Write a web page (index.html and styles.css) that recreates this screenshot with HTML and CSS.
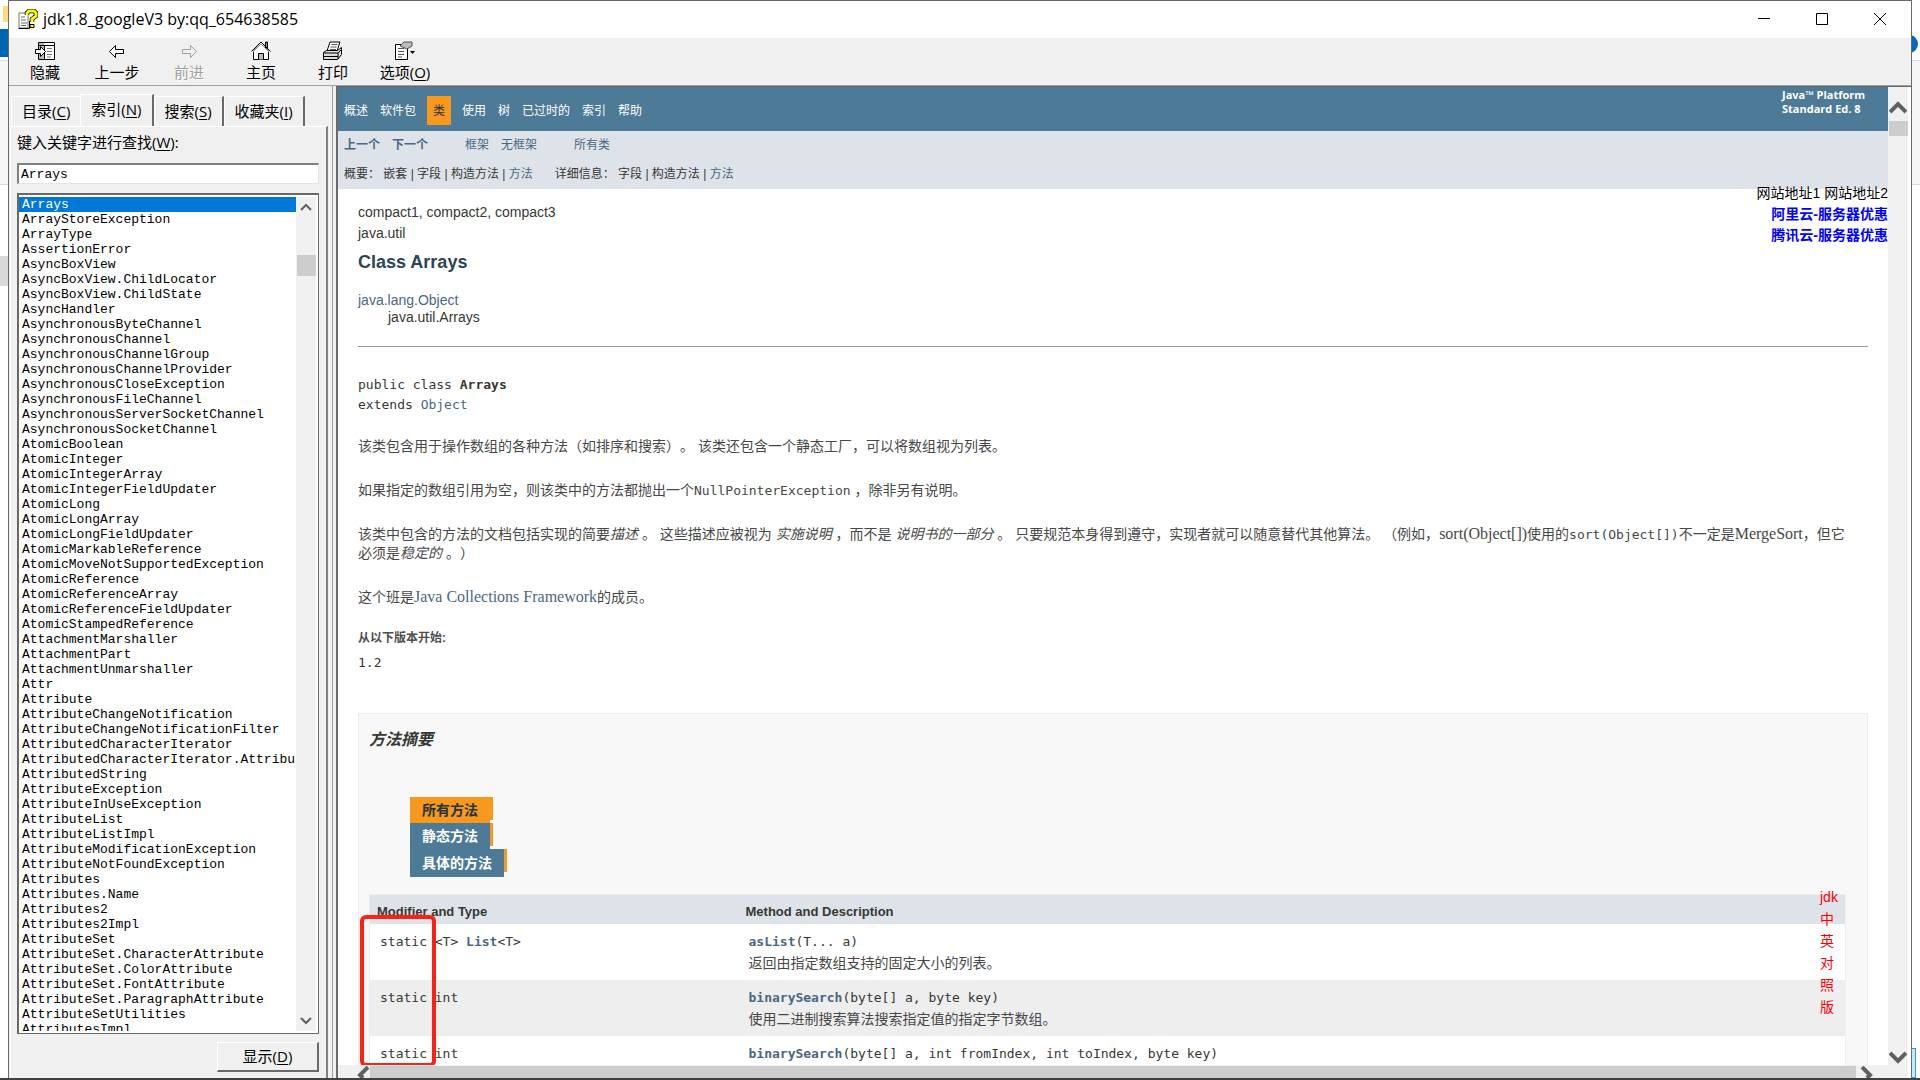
FILE: index.html
```html
<!DOCTYPE html>
<html lang="zh-CN">
<head>
<meta charset="utf-8">
<title>jdk1.8_googleV3 by:qq_654638585</title>
<link rel="stylesheet" href="styles.css">
</head>
<body>
<div class="desktop">
  <div class="strip strip-left"><i class="folder"></i><i class="blue"></i><i class="ribbon"></i><i class="gap"></i><i class="thumb"></i></div>
  <div class="window">
    <header class="titlebar">
      <svg class="app-icon" width="20" height="20" viewBox="0 0 20 20"><path d="M1 4h9v15H1z" fill="#fff" stroke="#777"/><path d="M.5 19.500h11V12" fill="none" stroke="#000"/><path d="M3 8h4M3 11h5M3 14h6M3 16.500h5" stroke="#666"/><path d="M9 6V4l2-2h5l2 2v3l-4 3v3" fill="none" stroke="#000" stroke-width="4.500"/><path d="M9 6V4l2-2h5l2 2v3l-4 3v3" fill="none" stroke="#ff0" stroke-width="3"/><path d="M12 15.500h4v3h-4z" fill="#ff0" stroke="#000"/></svg>
      <h1>jdk1.8_googleV3 by:qq_654638585</h1>
      <div class="controls">
        <button aria-label="最小化"><svg width="12" height="12"><path d="M0 5.500h12" stroke="#000"/></svg></button>
        <button aria-label="最大化"><svg width="12" height="12"><path d="M.5.5h11v11H.5z" fill="none" stroke="#000"/></svg></button>
        <button aria-label="关闭"><svg width="12" height="12"><path d="M0 0l12 12M12 0L0 12" stroke="#000"/></svg></button>
      </div>
    </header>
    <div class="toolbar">
      <button><svg width="20" height="20"><path d="M3.500 1.500h16v17h-16z" fill="#fff" stroke="#000"/><path d="M4 2h5v16H4z" fill="#bbb"/><path d="M9.500 4v14M3 4.500h16" stroke="#000"/><path d="M12 7.500h5M12 10.500h5M12 13.500h5M12 16h4" stroke="#777"/><path d="M.5 8.500h5v-3l5 5-5 5v-3h-5z" fill="#fff" stroke="#000"/></svg><span>隐藏</span></button>
      <button><svg width="20" height="20"><path d="M2.500 10.500l6-6v4h8v4h-8v4z" fill="#fff" stroke="#000"/></svg><span>上一步</span></button>
      <button disabled><svg width="20" height="20"><path d="M17.500 10.500l-6-6v4h-8v4h8v4z" fill="#f0f0f0" stroke="#a0a0a0"/></svg><span>前进</span></button>
      <button><svg width="20" height="20"><path d="M14.500 1h2v6h-2z" fill="#888" stroke="#000"/><path d="M2.500 10v8.500h15V10L10 3z" fill="#fff" stroke="#000"/><path d="M.5 10.500L10 1l9.500 9.500" fill="none" stroke="#000"/><path d="M2 11l8-8 8 8" fill="none" stroke="#999"/><path d="M7.500 18.500v-6h5v6" fill="#bbb" stroke="#000"/></svg><span>主页</span></button>
      <button><svg width="20" height="20"><path d="M4 10l3-9h10l-3 9z" fill="#fff" stroke="#000"/><path d="M8.500 3.500h6M7.500 6h6M7 8.500h6" stroke="#555"/><path d="M.5 11.500l3-2h11l4-3v7l-4 5H.5z" fill="#ddd" stroke="#000"/><path d="M1 12h14l4-4M1 15.500h14M15 12v6" fill="none" stroke="#000"/></svg><span>打印</span></button>
      <button><svg width="20" height="20"><path d="M.5 3.500h12v15H.5z" fill="#fff" stroke="#000"/><path d="M3 7.500h6M3 10.500h6M3 13.500h6M3 16h4" stroke="#555"/><path d="M5 5l4-4h8v4l-5 3z" fill="#bbb" stroke="#555"/><path d="M15 10h5l-2.500 3z" fill="#000"/></svg><span>选项(<u>O</u>)</span></button>
    </div>
    <div class="work">
      <aside class="side">
        <div class="tabs">
          <button>目录(<u>C</u>)</button><button class="active">索引(<u>N</u>)</button><button>搜索(<u>S</u>)</button><button>收藏夹(<u>I</u>)</button>
        </div>
        <div class="panel">
          <label for="key">键入关键字进行查找(<u>W</u>):</label>
          <input id="key" type="text" value="Arrays">
          <div class="listbox">
            <ul>
              <li class="sel">Arrays</li><li>ArrayStoreException</li><li>ArrayType</li><li>AssertionError</li><li>AsyncBoxView</li><li>AsyncBoxView.ChildLocator</li><li>AsyncBoxView.ChildState</li><li>AsyncHandler</li><li>AsynchronousByteChannel</li><li>AsynchronousChannel</li><li>AsynchronousChannelGroup</li><li>AsynchronousChannelProvider</li><li>AsynchronousCloseException</li><li>AsynchronousFileChannel</li><li>AsynchronousServerSocketChannel</li><li>AsynchronousSocketChannel</li><li>AtomicBoolean</li><li>AtomicInteger</li><li>AtomicIntegerArray</li><li>AtomicIntegerFieldUpdater</li><li>AtomicLong</li><li>AtomicLongArray</li><li>AtomicLongFieldUpdater</li><li>AtomicMarkableReference</li><li>AtomicMoveNotSupportedException</li><li>AtomicReference</li><li>AtomicReferenceArray</li><li>AtomicReferenceFieldUpdater</li><li>AtomicStampedReference</li><li>AttachmentMarshaller</li><li>AttachmentPart</li><li>AttachmentUnmarshaller</li><li>Attr</li><li>Attribute</li><li>AttributeChangeNotification</li><li>AttributeChangeNotificationFilter</li><li>AttributedCharacterIterator</li><li>AttributedCharacterIterator.Attribute</li><li>AttributedString</li><li>AttributeException</li><li>AttributeInUseException</li><li>AttributeList</li><li>AttributeListImpl</li><li>AttributeModificationException</li><li>AttributeNotFoundException</li><li>Attributes</li><li>Attributes.Name</li><li>Attributes2</li><li>Attributes2Impl</li><li>AttributeSet</li><li>AttributeSet.CharacterAttribute</li><li>AttributeSet.ColorAttribute</li><li>AttributeSet.FontAttribute</li><li>AttributeSet.ParagraphAttribute</li><li>AttributeSetUtilities</li><li>AttributesImpl</li>
            </ul>
            <div class="vbar">
              <svg width="12" height="8"><path d="M1 7l5-5 5 5" fill="none" stroke="#606060" stroke-width="2"/></svg>
              <i></i>
              <svg class="end" width="12" height="8"><path d="M1 1l5 5 5-5" fill="none" stroke="#606060" stroke-width="2"/></svg>
            </div>
          </div>
          <button class="show">显示(<u>D</u>)</button>
        </div>
      </aside>
      <main class="viewer">
        <div class="page-col">
          <div class="doc">
            <nav class="topnav">
              <ul><li><a href="#">概述</a></li><li><a href="#">软件包</a></li><li class="cur">类</li><li><a href="#">使用</a></li><li><a href="#">树</a></li><li><a href="#">已过时的</a></li><li><a href="#">索引</a></li><li><a href="#">帮助</a></li></ul>
              <div class="about">Java™ Platform<br>Standard Ed. 8</div>
            </nav>
            <div class="subnav">
              <div class="links"><span><a href="#"><b>上一个</b></a><a href="#"><b>下一个</b></a></span><span><a href="#">框架</a><a href="#">无框架</a></span><span><a href="#">所有类</a></span></div>
              <div class="links detail"><span>概要：&nbsp;嵌套&nbsp;|&nbsp;字段&nbsp;|&nbsp;构造方法&nbsp;|&nbsp;<a href="#">方法</a></span><span>详细信息：&nbsp;字段&nbsp;|&nbsp;构造方法&nbsp;|&nbsp;<a href="#">方法</a></span></div>
            </div>
            <div class="ads"><span>网站地址1 网站地址2</span><a href="#">阿里云-服务器优惠</a><a href="#">腾讯云-服务器优惠</a></div>
            <div class="side-note">jdk<br>中<br>英<br>对<br>照<br>版</div>
            <article>
              <div class="profile">compact1, compact2, compact3<br>java.util</div>
              <h2>Class Arrays</h2>
              <ul class="tree"><li><a href="#">java.lang.Object</a></li><li>java.util.Arrays</li></ul>
              <hr>
              <div class="sig">public class <b>Arrays</b><br>extends <a href="#">Object</a></div>
              <p>该类包含用于操作数组的各种方法（如排序和搜索）。 该类还包含一个静态工厂，可以将数组视为列表。</p>
              <p>如果指定的数组引用为空，则该类中的方法都抛出一个<code>NullPointerException</code> ，除非另有说明。</p>
              <p>该类中包含的方法的文档包括实现的简要<i>描述</i> 。 这些描述应被视为<i> 实施说明</i> ，而不是<i> 说明书的一部分</i> 。 只要规范本身得到遵守，实现者就可以随意替代其他算法。 （例如，<span class="lat">sort(Object[])</span>使用的<code>sort(Object[])</code>不一定是<span class="lat">MergeSort</span>，但它<br>必须是<i>稳定的</i> 。）</p>
              <p>这个班是<a class="lat" href="#">Java Collections Framework</a>的成员。</p>
              <dl><dt>从以下版本开始:</dt><dd>1.2</dd></dl>
              <section class="summary">
                <h3>方法摘要</h3>
                <div class="mtabs"><div class="on"><button>所有方法</button></div><div><button>静态方法</button></div><div><button>具体的方法</button></div></div>
                <table>
                  <thead><tr><th>Modifier and Type</th><th>Method and Description</th></tr></thead>
                  <tbody>
                    <tr><td><code>static &lt;T&gt; <a href="#"><b>List</b></a>&lt;T&gt;</code></td><td><code><a href="#"><b>asList</b></a>(T... a)</code><div>返回由指定数组支持的固定大小的列表。</div></td></tr>
                    <tr class="alt"><td><code>static int</code></td><td><code><a href="#"><b>binarySearch</b></a>(byte[] a, byte key)</code><div>使用二进制搜索算法搜索指定值的指定字节数组。</div></td></tr>
                    <tr><td><code>static int</code></td><td><code><a href="#"><b>binarySearch</b></a>(byte[] a, int fromIndex, int toIndex, byte key)</code></td></tr>
                  </tbody>
                </table>
                <div class="mark"></div>
              </section>
            </article>
          </div>
          <div class="hbar"><svg width="14" height="12"><path d="M12 1L4 9l3 3" fill="none" stroke="#606060" stroke-width="4"/></svg><i></i><svg width="14" height="12"><path d="M2 1l8 8-3 3" fill="none" stroke="#606060" stroke-width="4"/></svg></div>
        </div>
        <div class="vbar big">
          <svg width="18" height="14"><path d="M1 12l8-8 8 8" fill="none" stroke="#606060" stroke-width="4"/></svg>
          <i></i>
          <svg class="end" width="18" height="14"><path d="M1 2l8 8 8-8" fill="none" stroke="#606060" stroke-width="4"/></svg>
        </div>
      </main>
    </div>
  </div>
  <div class="strip strip-right"><i class="ball"></i><i class="band"></i><i class="frame"></i></div>
</div>
</body>
</html>
```
FILE: styles.css
```css
* { box-sizing: border-box; }
body { margin: 0; background: #fff; color: #000; font-family: "Open Sans", "Noto Sans CJK SC", sans-serif; text-spacing-trim: space-all; }
button { font: inherit; color: inherit; border: 0; padding: 0; background: none; }
ul, dl, dd { margin: 0; padding: 0; list-style: none; }
a { color: #4a6782; text-decoration: none; }
u { text-underline-offset: 2px; }

.desktop { display: flex; height: 100vh; overflow: hidden; border-bottom: 2px solid #404040; }
.strip { flex: none; width: 8px; display: flex; flex-direction: column; overflow: hidden; }
.strip i { flex: none; }
.folder { height: 16px; margin: 6px 0 7px 3px; background: #fddc7a; }
.blue { height: 28px; background: #0066b4; }
.ribbon { height: 125px; margin-top: 3px; background: #f5f6f7; border: solid #dadbdc; border-width: 1px 0; }
.gap { height: 71px; }
.thumb { height: 30px; background: #d9d9d9; }
.ball { width: 18px; height: 18px; margin: 35px 0 7px -12px; border-radius: 9px; background: #0067c5; }
.band { height: 125px; background: #f5f6f7; border: solid #dadbdc; border-width: 1px 0; }
.frame { width: 4px; height: 30px; margin-top: auto; border: 1px solid #26a0da; border-left: 0; background: #cce8ff; }
.window { flex: 1; min-width: 0; display: flex; flex-direction: column; border: 1px solid #6a6a6a; border-bottom: 0; }

.titlebar { flex: none; height: 37px; display: flex; align-items: center; padding: 0 2px 1px 9px; background: #fff; }
.titlebar h1 { margin: 0 0 0 5px; font-size: 16px; line-height: 20px; font-weight: 400; }
.controls { display: flex; margin-left: auto; }
.controls button { width: 58px; height: 36px; display: grid; place-items: center; }
.toolbar { flex: none; height: 48px; display: flex; background: #f0f0f0; border-bottom: 1px solid #a0a0a0; }
.toolbar button { width: 72px; display: flex; flex-direction: column; align-items: center; padding-top: 3px; font-size: 15px; line-height: 22px; }
.toolbar button:disabled { color: #a0a0a0; text-shadow: 1px 1px #fff; }
.work { flex: 1; min-height: 0; display: flex; gap: 3px; background: #f0f0f0; }

.side { flex: none; width: 324px; display: flex; flex-direction: column; padding: 8px 4px 0 1px; border-right: 1px solid #a0a0a0; font-size: 15px; }
.tabs { flex: none; height: 32px; display: flex; align-items: flex-end; padding-left: 1px; }
.tabs button { height: 30px; padding: 0 10px 2px; border: solid #fff; border-width: 1px 0 0 1px; border-right: 2px solid #696969; }
.tabs button:first-child { border-right: 0; }
.tabs .active { height: 32px; padding-bottom: 5px; background: #f0f0f0; }
.panel { flex: 1; min-height: 0; display: flex; flex-direction: column; padding: 5px 7px 6px 6px; border: solid #fff; border-width: 1px 0 0 1px; border-right: 2px solid #808080; }
.panel label { line-height: 20px; }
.panel input { height: 21px; margin-top: 11px; padding: 0 2px; border: 1px solid #e3e3e3; border-top: 2px solid #808080; border-left: 2px solid #808080; font: 13px "Liberation Mono", monospace; }
.listbox { flex: 1; min-height: 0; display: flex; margin: 9px 0 8px; background: #fff; border: 2px solid #696969; border-right-width: 1px; border-bottom-width: 1px; padding: 2px 2px 2px 0; overflow: hidden; }
.listbox ul { flex: 1; min-width: 0; overflow: hidden; font: 13px/15px "Liberation Mono", monospace; }
.listbox li { padding-left: 3px; white-space: nowrap; }
.listbox .sel { background: #0078d7; color: #fff; }
.vbar { flex: none; width: 20px; display: flex; flex-direction: column; align-items: center; padding: 6px 0; background: #f0f0f0; }
.vbar i { width: 19px; height: 21px; margin-top: 44px; background: #cdcdcd; }
.vbar .end { margin-top: auto; }
.show { width: 102px; height: 30px; align-self: flex-end; padding-bottom: 2px; border: 1px solid #fff; border-right: 2px solid #696969; border-bottom: 2px solid #696969; }

.viewer { flex: 1; min-width: 0; display: flex; border-top: 1px solid #696969; border-left: 2px solid #696969; padding-right: 3px; background: #fff; }
.page-col { flex: 1; min-width: 0; display: flex; flex-direction: column; }
.doc { position: relative; flex: 1; min-height: 0; overflow: hidden; color: #353833; font: 14px/20px "Liberation Sans", "Noto Sans CJK SC", sans-serif; }
.big { padding: 13px 0; }
.big i { height: 15px; margin-top: 7px; }
.hbar { flex: none; height: 13px; display: flex; justify-content: space-between; padding: 1px 14px 0 18px; background: #f0f0f0; }
.hbar i { flex: 1; margin-right: 4px; background: #cdcdcd; }

.topnav { display: flex; justify-content: space-between; height: 44px; padding: 0 21px 0 6px; background: #4d7a97; color: #fff; font-size: 12px; }
.topnav ul { display: flex; gap: 12px; align-items: center; padding-top: 3px; }
.topnav a { color: #fff; }
.cur { padding: 5px 6px 4px; margin: 0 -1px; background: #f8981d; color: #253441; }
.about { width: 85px; white-space: nowrap; font: bold 11px/14px "Open Sans", sans-serif; padding-top: 1px; }
.subnav { height: 58px; padding: 4px 6px; background: #dee3e9; font-size: 12px; }
.links { display: flex; gap: 37px; margin-bottom: 9px; }
.links a + a { margin-left: 12px; }
.detail { gap: 22px; }
.ads { position: absolute; right: 0; top: 96px; display: flex; flex-direction: column; align-items: flex-end; line-height: 21px; color: #000; }
.ads a { color: #00f; font-weight: 700; }
.side-note { position: absolute; z-index: 1; right: 39px; top: 799px; width: 29px; line-height: 22px; color: #f00; }

article { padding: 13px 20px 0; }
.profile { line-height: 21px; }
h2 { margin: 7px 0 19px; font-size: 18px; line-height: 22px; color: #2c4557; }
.tree { line-height: 17px; }
.tree li + li { padding-left: 30px; }
hr { margin: 20px 0 28px; border: solid #999; border-width: 1px 0 0; }
.sig { margin-bottom: 22px; }
.sig, code, dd { font: 13px/20px "DejaVu Sans Mono", monospace; }
p { margin: 0 0 25px; line-height: 19px; color: #474747; white-space: nowrap; }
p code, td code, .lat { line-height: 1px; }
.lat { font-family: "Liberation Serif", serif; font-size: 16px; }
dl { margin-top: -4px; }
dt { font-size: 12px; font-weight: 700; line-height: 20px; color: #4e4e4e; }
dd { margin: 5px 0 40px; }
.summary { position: relative; padding: 16px 21px 0 10px; border: 1px solid #ededed; background: #f8f8f8; }
h3 { margin: 0; font-size: 16px; line-height: 20px; font-style: italic; }
.mtabs { display: flex; flex-direction: column; align-items: flex-start; margin: 47px 0 17px 41px; font-weight: 700; }
.mtabs div { height: 26px; padding-right: 3px; background: linear-gradient(#f8981d 23px, #fff 23px); color: #fff; }
.mtabs div:last-child { height: 28px; background: linear-gradient(#f8981d 23px, #f8f8f8 23px); }
.mtabs button { display: block; height: 100%; padding: 0 12px; background: #4d7a97; }
.mtabs .on button { background: #f8981d; color: #253441; }
table { width: 100%; border-collapse: collapse; table-layout: fixed; background: #fff; border: 1px solid #eee; }
th { height: 29px; padding: 6px 0 0 7px; background: #dee3e9; text-align: left; font-size: 13px; line-height: 20px; }
th:first-child { width: 369px; }
td { height: 56px; padding: 6px 0 6px 10px; vertical-align: top; line-height: 22px; }
.alt { background: #eeeeef; }
td div { color: #474747; }
.mark { position: absolute; left: 1px; top: 201px; width: 76px; height: 152px; border: 4px solid #fe2013; border-radius: 6px; }
```
